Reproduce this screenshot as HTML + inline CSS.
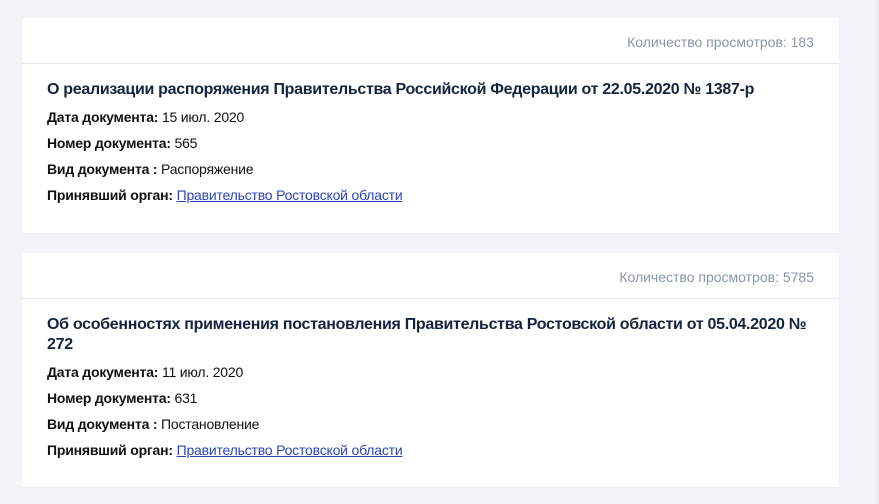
<!DOCTYPE html>
<html><head><meta charset="utf-8"><style>
body{margin:0;background:#f2f4f8;font-family:"Liberation Sans",sans-serif;width:879px;height:504px;overflow:hidden;position:relative}
.card{position:absolute;left:22px;width:817px;background:#fff;box-shadow:0 1px 2px rgba(0,0,0,.04)}
.hd{height:46px;border-bottom:1px solid #e3e9f2;text-align:right;padding-right:25px;box-sizing:border-box;line-height:48px;font-size:14px;color:#8796ab}
.bd{padding:16px 25px 0}
h2{margin:0 0 4px;font-size:16px;line-height:20px;color:#15233f;font-weight:bold;letter-spacing:-0.3px}
p{margin:0;font-size:14px;line-height:26px;color:#111;letter-spacing:-0.2px}
b{color:#111}
a{color:#2a44b8;text-decoration:underline}
.edge{position:absolute;right:0;top:0;width:3px;height:504px;background:#e9ecef}
</style></head><body>
<div class="card" style="top:18px;height:215px">
<div class="hd">Количество просмотров: 183</div>
<div class="bd">
<h2>О реализации распоряжения Правительства Российской Федерации от 22.05.2020 № 1387-р</h2>
<p><b>Дата документа:</b> 15 июл. 2020</p>
<p><b>Номер документа:</b> 565</p>
<p><b>Вид документа :</b> Распоряжение</p>
<p><b>Принявший орган:</b> <a>Правительство Ростовской области</a></p>
</div></div>
<div class="card" style="top:253px;height:234px">
<div class="hd">Количество просмотров: 5785</div>
<div class="bd">
<h2>Об особенностях применения постановления Правительства Ростовской области от 05.04.2020 №<br>272</h2>
<p><b>Дата документа:</b> 11 июл. 2020</p>
<p><b>Номер документа:</b> 631</p>
<p><b>Вид документа :</b> Постановление</p>
<p><b>Принявший орган:</b> <a>Правительство Ростовской области</a></p>
</div></div>
<div class="edge"></div>
</body></html>
